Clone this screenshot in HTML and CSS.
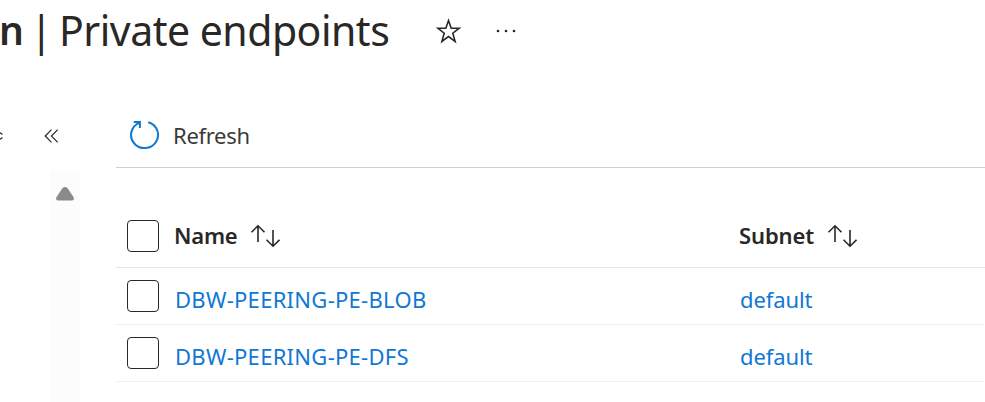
FILE: index.html
```html
<!DOCTYPE html>
<html lang="en">
<head>
    <meta charset="UTF-8">
    <meta name="viewport" content="width=device-width, initial-scale=1.0">
    <title>Private endpoints</title>
    <link rel="stylesheet" href="styles.css">
</head>
<body>
    <div class="header">
        <h1 class="title"><b class="resource">n</b><span class="divider">|</span><span class="section">Private endpoints</span></h1>
        <svg class="star" width="26" height="26" viewBox="0 0 26 26">
            <path d="M12.5 2.6 L15.2 10.2 H23.2 L16.8 15.2 L19.1 23.4 L12.5 18.5 L5.9 23.4 L8.2 15.2 L1.8 10.2 H9.8 Z"/>
        </svg>
        <svg class="more" width="22" height="4" viewBox="0 0 22 4">
            <circle cx="2" cy="2" r="1.3"/>
            <circle cx="10" cy="2" r="1.3"/>
            <circle cx="18" cy="2" r="1.3"/>
        </svg>
    </div>
    <div class="container">
        <div class="sidebar">
            <div class="side-tools">
                <svg class="sort-menu" width="4" height="12" viewBox="0 0 4 12">
                    <path d="M-1 2 L2.4 4.6 M-1 10 L2.4 7.4"/>
                </svg>
                <svg class="collapse" width="16" height="16" viewBox="0 0 16 16">
                    <path d="M7.5 1.7 L1.2 8 L7.5 14.3 M13.7 1.7 L7.4 8 L13.7 14.3"/>
                </svg>
            </div>
            <div class="scrollbar">
                <svg width="18" height="14" viewBox="0 0 18 14">
                    <path d="M6.2 1.4 Q9 -1.2 11.8 1.4 L17.6 10.2 Q18.6 13.2 16 13.6 H2 Q-0.6 13.2 0.4 10.2 Z"/>
                </svg>
            </div>
        </div>
        <div class="main">
            <div class="toolbar">
                <svg class="refresh" width="30" height="30" viewBox="0 0 30 30">
                    <path d="M18.2 2.2 A13.5 13.2 0 1 1 9.2 2.8 M3.8 2 H9.9 V8"/>
                </svg>
                <span class="label">Refresh</span>
            </div>
            <div class="table">
                <div class="row head">
                    <span class="box"></span>
                    <div class="name"><span class="col-name">Name</span>
                        <svg class="sort" width="30" height="24" viewBox="0 0 30 24">
                            <path d="M8 18 V2 M1.5 8.2 L8 1.8 L14.5 8.2 M23 6 V22 M16.5 15.8 L23 22.2 L29.5 15.8"/>
                        </svg>
                    </div>
                    <div class="subnet"><span class="col-subnet">Subnet</span>
                        <svg class="sort" width="30" height="24" viewBox="0 0 30 24">
                            <path d="M8 18 V2 M1.5 8.2 L8 1.8 L14.5 8.2 M23 6 V22 M16.5 15.8 L23 22.2 L29.5 15.8"/>
                        </svg>
                    </div>
                </div>
                <div class="row">
                    <span class="box"></span>
                    <a class="name">DBW-PEERING-PE-BLOB</a>
                    <a class="subnet">default</a>
                </div>
                <div class="row">
                    <span class="box"></span>
                    <a class="name">DBW-PEERING-PE-DFS</a>
                    <a class="subnet">default</a>
                </div>
            </div>
        </div>
    </div>
</body>
</html>
```

FILE: styles.css
```css
*{
    margin: 0;
    padding: 0;
    box-sizing: border-box;
}
body{
    height: 402px;
    overflow: hidden;
    background: #fff;
    color: #292827;
    font-family: "Noto Sans", "Open Sans", sans-serif;
    font-size: 22px;
}
svg{
    display: block;
    flex: none;
    fill: none;
    stroke: #292827;
    stroke-width: 1.6;
}
.header{
    display: flex;
    height: 105px;
}
.title{
    display: flex;
    width: 436px;
    height: 60px;
    font-size: 41px;
    font-weight: 400;
    line-height: 60px;
    white-space: nowrap;
}
.resource{
    width: 30px;
    font-size: 39px;
    font-weight: 600;
    text-indent: -1px;
}
.divider{
    width: 29px;
}
.section{
    letter-spacing: -0.5px;
}
.star{
    margin-top: 18px;
}
.more{
    margin: 29px 0 0 34px;
    fill: #292827;
    stroke: none;
}
.container{
    display: flex;
    height: 297px;
}
.sidebar{
    width: 80px;
    margin-right: 36px;
}
.side-tools{
    display: flex;
    align-items: center;
    height: 66px;
    padding-bottom: 4px;
}
.side-tools svg{
    stroke-width: 1.2;
}
.collapse{
    margin-left: 40px;
}
.scrollbar{
    width: 30px;
    height: 231px;
    margin-left: 50px;
    padding: 16px 6px;
    background: #fcfcfc;
}
.scrollbar svg{
    fill: #8a8a8a;
    stroke: none;
}
.main{
    flex: 1;
}
.toolbar{
    display: flex;
    align-items: center;
    height: 63px;
    padding: 0 0 3px 14px;
    border-bottom: 1px solid #d2d0ce;
}
.refresh{
    stroke: #0f78d4;
    stroke-width: 2;
}
.label{
    margin-left: 13px;
    color: #3b3a39;
    letter-spacing: -0.3px;
}
.table{
    padding-top: 37px;
}
.row{
    display: flex;
    height: 57px;
    margin-right: 1px;
    padding-left: 11px;
    border-bottom: 1px solid #f0f0f0;
    line-height: 30px;
}
.head{
    height: 63px;
    margin-right: 0;
    padding-top: 15px;
    border-color: #e6e6e6;
    font-weight: 600;
    letter-spacing: -0.2px;
}
.box{
    width: 32px;
    height: 32px;
    margin-top: 12px;
    border: 1.5px solid #292827;
    border-radius: 4px;
}
.head .box{
    margin-top: 0;
}
.name{
    width: 565px;
    margin-left: 16px;
}
.head .name{
    margin-left: 15px;
}
.row a{
    padding-top: 16px;
    color: #0f78d4;
}
a.name{
    letter-spacing: 0.28px;
}
.head div{
    display: flex;
}
.sort{
    margin: 4px 0 0 12px;
}
.subnet .sort{
    margin-left: 13px;
}
.row .subnet{
    letter-spacing: -0.1px;
}
```
